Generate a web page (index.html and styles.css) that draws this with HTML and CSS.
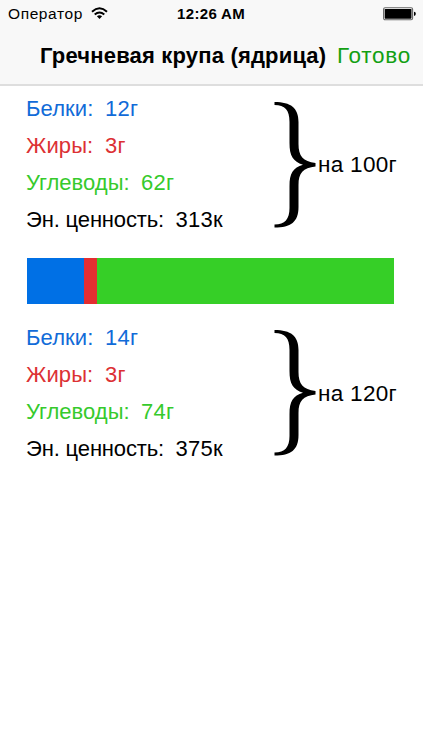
FILE: index.html
```html
<!DOCTYPE html>
<html lang="ru">
<head>
<meta charset="utf-8">
<title>Гречневая крупа (ядрица)</title>
<link rel="stylesheet" href="styles.css">
</head>
<body>
<header class="header">
  <div class="status">
    <div class="carrier"><span class="carrier-name">Оператор</span>
      <svg class="wifi" width="17" height="13" viewBox="0 0 17 13" fill="none" stroke="#000" stroke-width="2"><path d="M1 4.7Q8.5-2.1 16 4.7"/><path d="M3.7 7.6Q8.5 3.4 13.3 7.6"/><path d="M8.5 12L5.9 9.3Q8.5 7.4 11.1 9.3Z" fill="#000" stroke="none"/></svg>
    </div>
    <time class="clock">12:26 AM</time>
    <svg class="battery" width="33" height="14" viewBox="0 0 33 14"><rect x=".6" y=".8" width="29" height="12" rx="1.5" fill="#fff" stroke="#666" stroke-width="1.1"/><rect x="1.7" y="1.9" width="26.8" height="9.8" rx=".7"/><path d="M31 4.7Q32.8 4.7 32.8 6.8T31 8.9Z"/></svg>
  </div>
  <nav class="nav">
    <h1 class="title">Гречневая крупа (ядрица)</h1>
    <a class="done">Готово</a>
  </nav>
</header>
<main class="main">
  <section class="group">
    <dl class="facts">
      <div class="fact protein"><dt>Белки:</dt><dd>12г</dd></div>
      <div class="fact fat"><dt>Жиры:</dt><dd>3г</dd></div>
      <div class="fact carbs"><dt>Углеводы:</dt><dd>62г</dd></div>
      <div class="fact energy"><dt>Эн. ценность:</dt><dd>313к</dd></div>
    </dl>
    <svg class="brace" width="42" height="127" viewBox="0 0 42 127"><path d="M.5 0C17 0 24.5 6 24.5 20V42C24.5 54 29 59.5 41.5 61V64.5C29 66 24.5 71 24.5 83V105C24.5 120 17 125.500.5 125.500V122.500C11 122.500 15.500 117 15.500 106V84C15.500 71 19 66 29 62.750C19 59.500 15.500 54 15.500 41V20C15.500 8 11 3 .5 3Z"/></svg>
    <span class="portion">на 100г</span>
  </section>
  <div class="bar"><i class="bar-protein"></i><i class="bar-fat"></i><i class="bar-carbs"></i></div>
  <section class="group total">
    <dl class="facts">
      <div class="fact protein"><dt>Белки:</dt><dd>14г</dd></div>
      <div class="fact fat"><dt>Жиры:</dt><dd>3г</dd></div>
      <div class="fact carbs"><dt>Углеводы:</dt><dd>74г</dd></div>
      <div class="fact energy"><dt>Эн. ценность:</dt><dd>375к</dd></div>
    </dl>
    <svg class="brace" width="42" height="127" viewBox="0 0 42 127"><path d="M.5 0C17 0 24.5 6 24.5 20V42C24.5 54 29 59.5 41.5 61V64.5C29 66 24.5 71 24.5 83V105C24.5 120 17 125.500.5 125.500V122.500C11 122.500 15.500 117 15.500 106V84C15.500 71 19 66 29 62.750C19 59.500 15.500 54 15.500 41V20C15.500 8 11 3 .5 3Z"/></svg>
    <span class="portion">на 120г</span>
  </section>
</main>
</body>
</html>
```
FILE: styles.css
```css
* { box-sizing: border-box; margin: 0; padding: 0; }
body { width: 423px; height: 750px; overflow: hidden; background: #fff; color: #000; font: 22px "Liberation Sans", Arial, sans-serif; white-space: nowrap; }
.header { height: 86px; background: #f8f8f8; border-bottom: 2px solid #dedede; }
.status { display: grid; grid-template-columns: 169px 1fr 40px; align-items: center; height: 28px; padding-left: 8px; }
.carrier { display: flex; align-items: center; gap: 8px; font-size: 15.5px; letter-spacing: .6px; }
.carrier-name { width: 75px; margin-top: -1px; }
.wifi { margin-top: -2px; }
.clock { margin-top: -1px; font-size: 15px; font-weight: bold; letter-spacing: .35px; }
.battery { margin-top: -1px; }
.nav { display: flex; align-items: center; height: 56px; padding-left: 40px; }
.title { width: 297px; font-size: 22px; font-weight: bold; letter-spacing: .18px; }
.done { color: #13a013; font-size: 22.5px; letter-spacing: .75px; }
.main { padding: 4px 0 0 26px; }
.group { display: flex; align-items: center; height: 148px; }
.facts { width: 248px; }
.fact { display: flex; height: 37px; line-height: 37px; }
.fact dt { width: 79px; letter-spacing: .1px; }
.fact dd { letter-spacing: .25px; }
.carbs dt { width: 115px; letter-spacing: 0; }
.energy dt { width: 149.5px; letter-spacing: -.15px; }
.protein { color: #116bd8; }
.fat { color: #dc3034; }
.carbs { color: #36ca2c; }
.brace { flex: none; margin-top: 2px; }
.total .brace { margin-top: 0; }
.portion { margin: 1px 0 0 2px; font-size: 22.5px; letter-spacing: .3px; }
.bar { display: flex; width: 367px; height: 46px; margin: 20px 0 15px 1px; }
.bar-protein { width: 57px; background: #0070e5; }
.bar-fat { width: 13px; background: #e32e31; }
.bar-carbs { flex: 1; background: #36cf27; }
```
